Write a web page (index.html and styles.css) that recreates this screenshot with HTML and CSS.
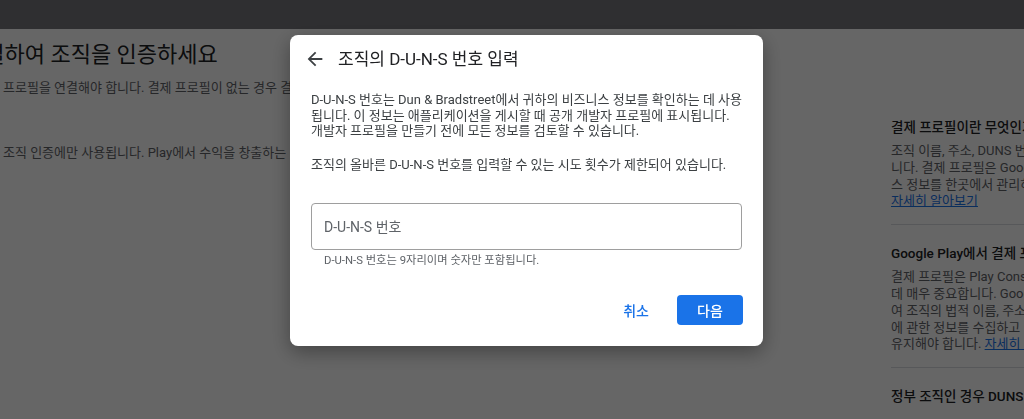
FILE: index.html
```html
<!DOCTYPE html>
<html lang="ko">
<head>
<meta charset="utf-8">
<title>Play Console - 조직 인증</title>
<link rel="stylesheet" href="styles.css">
</head>
<body>
<header class="topbar"></header>
<div class="page">
  <main class="main">
    <h1 class="main-title">연결하여 조직을 인증하세요</h1>
    <p class="main-text">프로필을 연결해야 합니다. 결제 프로필이 없는 경우 결제 프로필을 만들 수 있습니다.</p>
    <p class="main-text main-text-gap">조직 인증에만 사용됩니다. Play에서 수익을 창출하는 경우 결제 프로필이 필요합니다.</p>
  </main>
  <aside class="help">
    <section class="help-sec">
      <h3 class="help-title">결제 프로필이란 무엇인가요?</h3>
      <p class="help-text">조직 이름, 주소, DUNS 번호 등 비즈니스 정보가 포함되어 있습<br>니다. 결제 프로필은 Google 서비스 전반에서 비즈니<br>스 정보를 한곳에서 관리하는 방법입니다.<br><a class="help-link" href="#">자세히 알아보기</a></p>
    </section>
    <section class="help-sec">
      <h3 class="help-title">Google Play에서 결제 프로필이 중요한 이유</h3>
      <p class="help-text">결제 프로필은 Play Console에서 조직을 인증하는<br>데 매우 중요합니다. Google은 결제 프로필을 사용하<br>여 조직의 법적 이름, 주소, 연락처 등 조직<br>에 관한 정보를 수집하고 이 정보를 최신 상태로<br>유지해야 합니다. <a class="help-link" href="#">자세히 알아보기</a></p>
    </section>
    <section class="help-sec">
      <h3 class="help-title">정부 조직인 경우 DUNS 번호가 필요한가요?</h3>
    </section>
  </aside>
</div>

<div class="scrim">
  <div class="dialog" role="dialog" aria-labelledby="dlg-title">
    <div class="dlg-head">
      <button class="back-btn" aria-label="뒤로">
        <svg viewBox="0 0 24 24" width="22" height="22"><path d="M20 11H7.83l5.59-5.59L12 4l-8 8 8 8 1.41-1.41L7.83 13H20v-2z"/></svg>
      </button>
      <h2 class="dlg-title" id="dlg-title">조직의 D-U-N-S 번호 입력</h2>
    </div>
    <div class="dlg-body">
      <p class="dlg-text">D-U-N-S 번호는 Dun &amp; Bradstreet에서 귀하의 비즈니스 정보를 확인하는 데 사용됩니다. 이 정보는 애플리케이션을 게시할 때 공개 개발자 프로필에 표시됩니다. 개발자 프로필을 만들기 전에 모든 정보를 검토할 수 있습니다.</p>
      <p class="dlg-text dlg-text-gap">조직의 올바른 D-U-N-S 번호를 입력할 수 있는 시도 횟수가 제한되어 있습니다.</p>
    </div>
    <div class="field">
      <input class="field-input" type="text" placeholder="D-U-N-S 번호">
      <div class="field-hint">D-U-N-S 번호는 9자리이며 숫자만 포함됩니다.</div>
    </div>
    <div class="dlg-actions">
      <button class="btn btn-text">취소</button>
      <button class="btn btn-primary">다음</button>
    </div>
  </div>
</div>
</body>
</html>
```
FILE: styles.css
```css
* { box-sizing: border-box; }

html, body {
  margin: 0;
  padding: 0;
}

body {
  width: 1024px;
  height: 419px;
  overflow: hidden;
  background: #ffffff;
  font-family: Roboto, "Noto Sans CJK KR", sans-serif;
  color: #202124;
}

.topbar {
  height: 29px;
  background: #77777b;
}

.page {
  display: grid;
  grid-template-columns: 867px 360px;
  column-gap: 24px;
  width: 1251px;
}

/* main column (partly hidden by the dialog) */
.main {
  padding: 11px 0 0 3px;
  min-width: 0;
}

.main-title {
  margin: 0 0 0 -39px;
  font-size: 22px;
  line-height: 30px;
  font-weight: 400;
  color: #202124;
  white-space: nowrap;
}

.main-text {
  margin: 9px 0 0;
  font-size: 13px;
  line-height: 18px;
  color: #5f6368;
  white-space: nowrap;
}

.main-text-gap { margin-top: 47px; }

/* right help panel */
.help {
  padding-top: 89px;
}

.help-sec {
  padding: 19px 0 14px;
  border-bottom: 1px solid #dadce0;
}

.help-sec:first-child { padding-top: 0; }
.help-sec:last-child { border-bottom: 0; }

.help-title {
  margin: 0 0 7px;
  font-size: 13.5px;
  line-height: 18px;
  font-weight: 500;
  color: #202124;
  white-space: nowrap;
}

.help-text {
  margin: 0;
  font-size: 13px;
  line-height: 16.8px;
  color: #5f6368;
  white-space: nowrap;
}

.help-link {
  color: #1a73e8;
  text-decoration: underline;
}

/* modal */
.scrim {
  position: fixed;
  inset: 0;
  background: rgba(0, 0, 0, 0.6);
  padding: 35px 0 0 290px;
}

.dialog {
  width: 473px;
  background: #ffffff;
  border-radius: 8px;
  box-shadow: 0 6px 20px rgba(0, 0, 0, 0.35);
  padding: 13px 21px 21px;
}

.dlg-head {
  display: flex;
  align-items: center;
  height: 22px;
  margin-left: -7px;
  gap: 12px;
}

.back-btn {
  display: flex;
  width: 22px;
  height: 22px;
  padding: 0;
  border: 0;
  background: none;
  fill: #3c4043;
  cursor: pointer;
}

.dlg-title {
  margin: 0;
  font-size: 17px;
  line-height: 22px;
  font-weight: 400;
  color: #202124;
}

.dlg-body {
  margin-top: 22px;
}

.dlg-text {
  margin: 0;
  font-size: 13px;
  line-height: 15.5px;
  color: #3c4043;
}

.dlg-text-gap { margin-top: 18.5px; }

.field {
  margin-top: 30.5px;
}

.field-input {
  display: block;
  width: 100%;
  height: 47px;
  padding: 0 12px;
  border: 1px solid #9e9e9e;
  border-radius: 4px;
  font-family: Roboto, "Noto Sans CJK KR", sans-serif;
  font-size: 14px;
  color: #202124;
  outline: none;
}

.field-input::placeholder {
  color: #5f6368;
}

.field-hint {
  margin-top: 4px;
  padding-left: 13px;
  font-size: 11.3px;
  line-height: 14px;
  color: #5f6368;
}

.dlg-actions {
  display: flex;
  justify-content: flex-end;
  align-items: center;
  gap: 14px;
  margin-top: 27px;
  margin-right: -1px;
}

.btn {
  height: 30px;
  border: 0;
  border-radius: 4px;
  font-family: Roboto, "Noto Sans CJK KR", sans-serif;
  font-size: 14px;
  font-weight: 500;
  cursor: pointer;
}

.btn-text {
  padding: 0 14px;
  background: none;
  color: #1a73e8;
}

.btn-primary {
  width: 66px;
  padding: 0;
  background: #1a73e8;
  color: #ffffff;
}
```
